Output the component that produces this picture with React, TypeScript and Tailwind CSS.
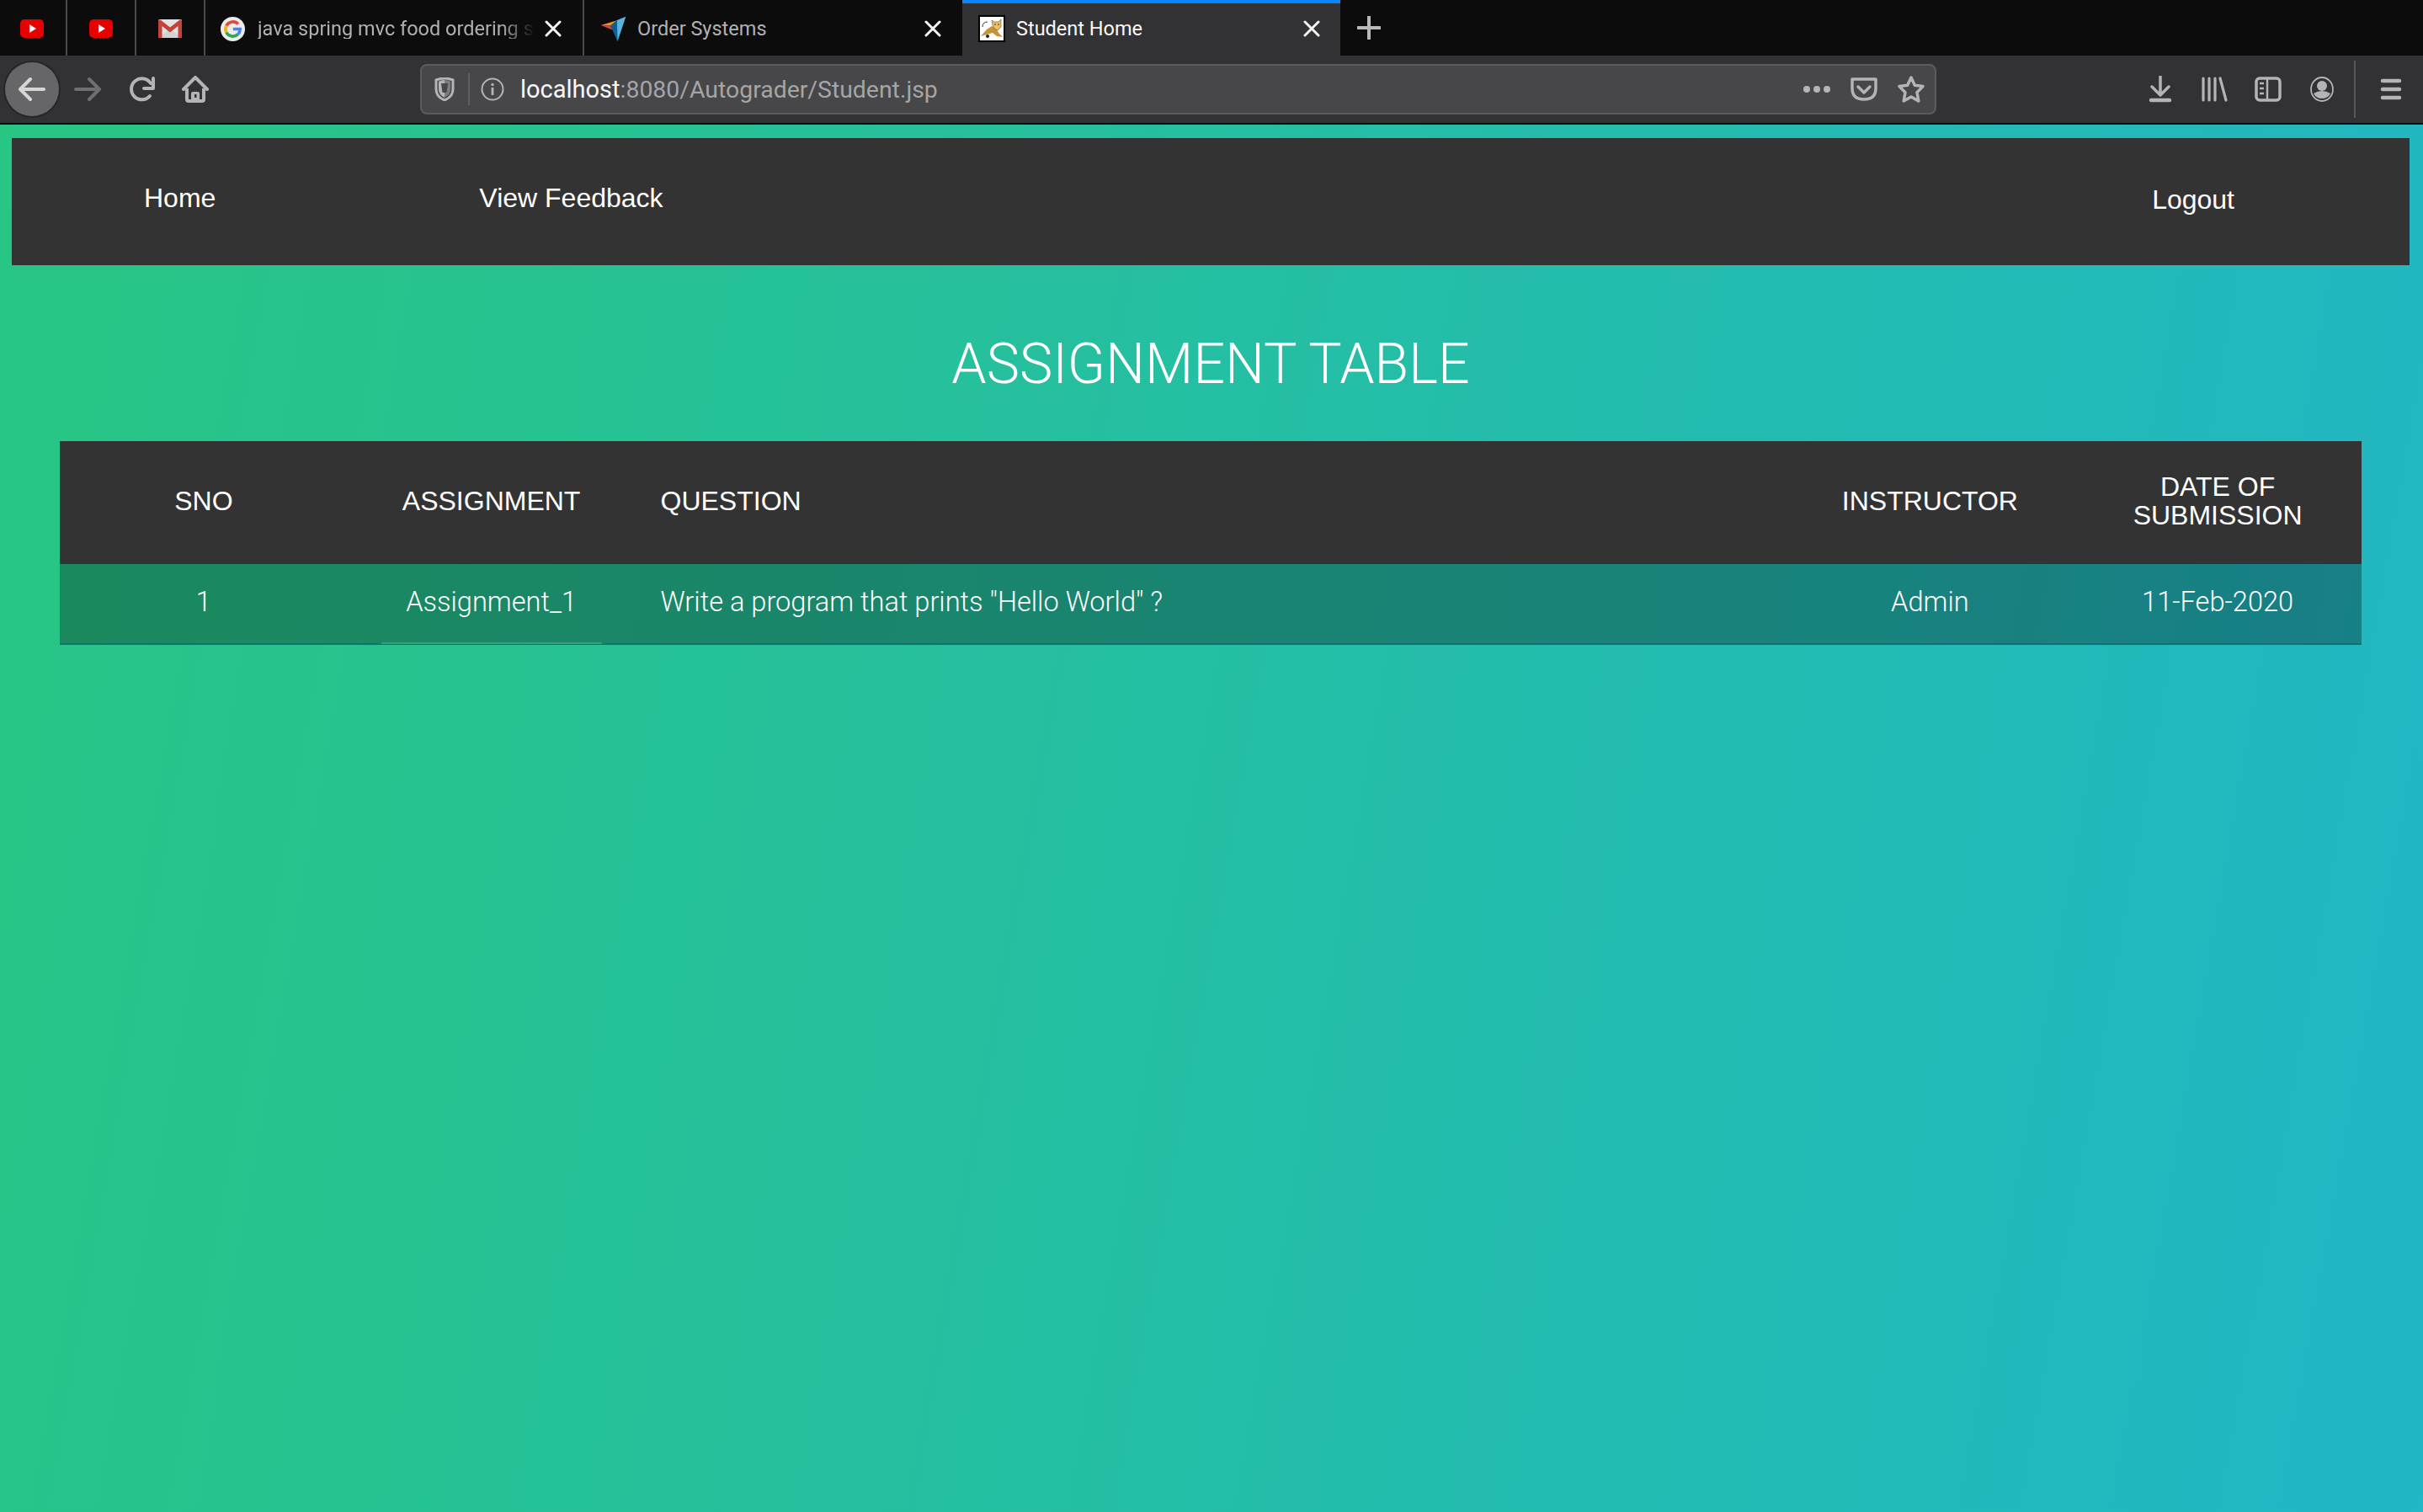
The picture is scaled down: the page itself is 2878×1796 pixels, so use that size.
import React from "react";

const ICON = "#b4b4b6";

function Close() {
  return (
    <svg width="20" height="20" viewBox="0 0 20 20" className="shrink-0">
      <path d="M2 2 L18 18 M18 2 L2 18" stroke="#f4f4f4" strokeWidth="3" strokeLinecap="round" />
    </svg>
  );
}

function YouTube() {
  return (
    <svg width="28" height="22" viewBox="0 0 28 22">
      <rect x="0" y="0" width="28" height="22" rx="5" fill="#e60000" />
      <path d="M11 6 L19 11 L11 16 Z" fill="#fff" />
    </svg>
  );
}

function Gmail() {
  return (
    <svg width="28" height="22" viewBox="0 0 28 22">
      <rect x="0" y="0" width="28" height="22" rx="1.5" fill="#e3e3e3" />
      <path d="M0 22 L14 11 L28 22 Z" fill="#d2d2d2" />
      <path d="M0 1.5 L0 21 Q0 22 1 22 L4.5 22 L4.5 8 L14 15.5 L23.5 8 L23.5 22 L27 22 Q28 22 28 21 L28 1.5 Q27 0 25.5 0.5 L14 9.5 L2.5 0.5 Q1 0 0 1.5 Z" fill="#c4433a" />
    </svg>
  );
}

function Google() {
  return (
    <svg width="29" height="29" viewBox="0 0 32 32" className="shrink-0">
      <circle cx="16" cy="16" r="16" fill="#ececec" />
      <path d="M7.6 11.6 A 9.6 9.6 0 0 1 23 9.4" fill="none" stroke="#dd4b3e" strokeWidth="4" />
      <path d="M7.6 11.6 A 9.6 9.6 0 0 0 7.6 20.4" fill="none" stroke="#f0b501" strokeWidth="4" />
      <path d="M7.6 20.4 A 9.6 9.6 0 0 0 22.8 22.8" fill="none" stroke="#34a353" strokeWidth="4" />
      <path d="M22.8 22.8 A 9.6 9.6 0 0 0 25.6 16 L16.4 16" fill="none" stroke="#4285f4" strokeWidth="4" />
    </svg>
  );
}

function Plane() {
  return (
    <svg width="33" height="33" viewBox="65 52 100 100" className="shrink-0">
      <polygon points="70,88 130,70 105,90" fill="#e8942a" />
      <polygon points="70,88 105,90 112,105" fill="#d8443a" />
      <polygon points="105,90 128,70 130,147" fill="#0f5f92" />
      <polygon points="160,57 130,147 128,70" fill="#58b4e0" />
    </svg>
  );
}

function Tomcat() {
  return (
    <div className="w-[32px] h-[32px] bg-white border-2 border-black shrink-0">
      <svg width="28" height="28" viewBox="0 0 28 28">
        <path d="M3 12 Q3 6 9 6" fill="none" stroke="#333" strokeWidth="1" />
        <path d="M1 23 L8 15 L14 11 L19 14 L23 20 L27 24 L20 23 L15 19 L8 21 Z" fill="#c4933a" />
        <path d="M14 4 L17 6 L22 6 L25 3 L25 12 L21 16 L17 14 L15 10 Z" fill="#e9c063" stroke="#6a4a16" strokeWidth="0.6" />
        <circle cx="9" cy="23" r="2" fill="#222" />
        <path d="M17 9 H19 M21 9 H23" stroke="#333" strokeWidth="1" />
      </svg>
    </div>
  );
}

function Ico({ children, w = 32, h = 32 }: { children: React.ReactNode; w?: number; h?: number }) {
  return (
    <svg width={w} height={h} viewBox={`0 0 ${w} ${h}`} fill="none">
      {children}
    </svg>
  );
}

function Btn({ children, className = "" }: { children: React.ReactNode; className?: string }) {
  return <div className={`w-[64px] h-[64px] flex items-center justify-center shrink-0 ${className}`}>{children}</div>;
}

export default function App() {
  const tabText = "text-[23.5px] leading-none font-['Roboto',sans-serif] whitespace-nowrap mt-[1px]";
  const th = "text-[32px] leading-[34px] font-normal text-white text-center align-middle pb-[5px] px-[30px]";
  const td = "text-[32.6px] leading-[38px] font-light text-white text-center align-middle pb-[4px] font-['Roboto',sans-serif] border-b-2 border-[#176f6d]";

  return (
    <div className="w-[2878px] h-[1796px] flex flex-col overflow-hidden font-['Liberation_Sans',sans-serif]">
      {/* tab strip */}
      <div className="h-[66px] bg-[#0c0c0d] flex shrink-0">
        <div className="w-[80px] flex items-center justify-center pt-[2px] pr-[2px] border-r-2 border-[#4a4a4c]"><YouTube /></div>
        <div className="w-[82px] flex items-center justify-center pt-[2px] border-r-2 border-[#4a4a4c]"><YouTube /></div>
        <div className="w-[82px] flex items-center justify-center pt-[2px] border-r-2 border-[#4a4a4c]"><Gmail /></div>
        <div className="w-[450px] flex items-center pt-[2px] pl-[18px] border-r-2 border-[#4a4a4c]">
          <Google />
          <span className={`${tabText} ml-[15px] w-[336px] overflow-hidden text-[#b1b1b3] [mask-image:linear-gradient(to_right,black_86%,transparent_98%)]`}>java spring mvc food ordering sy</span>
          <span className="ml-[5px] flex"><Close /></span>
        </div>
        <div className="w-[449px] flex items-center pt-[2px] pl-[18px]">
          <Plane />
          <span className={`${tabText} ml-[12px] w-[341px] text-[#b1b1b3]`}>Order Systems</span>
          <Close />
        </div>
        <div className="w-[449px] flex items-center pl-[19px] bg-[#323234] border-t-4 border-[#0a84ff] pb-[2px]">
          <Tomcat />
          <span className={`${tabText} ml-[13px] w-[341px] text-[#f9f9fa]`}>Student Home</span>
          <Close />
        </div>
        <div className="ml-[20px] flex items-center">
          <svg width="28" height="28" viewBox="0 0 28 28">
            <path d="M14 1 V27 M1 14 H27" stroke="#b9b9bb" strokeWidth="4" strokeLinecap="round" />
          </svg>
        </div>
      </div>

      {/* toolbar */}
      <div className="h-[82px] bg-[#323234] border-b-2 border-[#0c0c0d] flex items-center pl-[6px] pb-[1px] shrink-0">
        <Btn className="rounded-full bg-[#666668] ring-2 ring-[#262628]">
          <Ico>
            <path d="M30 16 H3 M14 4 L2 16 L14 28" stroke="#d6d6d7" strokeWidth="4" strokeLinecap="round" strokeLinejoin="round" />
          </Ico>
        </Btn>
        <Btn className="ml-[2px]">
          <Ico>
            <path d="M2 16 H29 M18 4 L30 16 L18 28" stroke="#6f6f71" strokeWidth="4" strokeLinecap="round" strokeLinejoin="round" />
          </Ico>
        </Btn>
        <Btn>
          <Ico>
            <path d="M26 24 A12.5 12.5 0 1 1 27 9" stroke={ICON} strokeWidth="4" strokeLinecap="round" />
            <path d="M30 3 V15 H19" stroke={ICON} strokeWidth="4" strokeLinejoin="round" strokeLinecap="round" />
          </Ico>
        </Btn>
        <Btn>
          <Ico>
            <path d="M2 16 L16 2 L30 16" stroke={ICON} strokeWidth="4" strokeLinecap="round" strokeLinejoin="round" />
            <path d="M6 15 V28 Q6 30 8 30 H24 Q26 30 26 28 V15" stroke={ICON} strokeWidth="4" />
            <path d="M11 30 V21 Q11 19 13 19 H19 Q21 19 21 21 V30 Z" fill={ICON} />
            <rect x="15" y="22" width="2.5" height="4" fill="#323234" />
          </Ico>
        </Btn>

        {/* url bar */}
        <div className="ml-[235px] w-[1801px] h-[60px] shrink-0 rounded-[8px] bg-[#474749] border-2 border-[#5b5b5d] flex items-center">
          <div className="ml-[15px] w-[24px] flex justify-center">
            <Ico w={24} h={28}>
              <path d="M2 3 Q12 -1 22 3 V14 Q22 23 12 27 Q2 23 2 14 Z" stroke={ICON} strokeWidth="3" />
              <path d="M12 3 Q17 3 19 5 V14 Q19 20 12 24 Z" fill={ICON} opacity="0.5" />
              <path d="M12 3 Q7 3 5 5 V14 Q5 20 12 24 Z" fill={ICON} />
              <path d="M8 7 H16 L14.5 18 H9.5 Z" fill="#474749" />
            </Ico>
          </div>
          <div className="ml-[16px] w-[2px] h-[38px] bg-[#5f5f61]" />
          <div className="ml-[13px] w-[28px]">
            <Ico w={28} h={28}>
              <circle cx="14" cy="14" r="12.5" stroke={ICON} strokeWidth="2" />
              <circle cx="14" cy="8.5" r="1.7" fill={ICON} />
              <rect x="12.6" y="12" width="2.8" height="9" fill={ICON} />
            </Ico>
          </div>
          <div className="ml-[19px] mt-[3px] text-[28.4px] leading-none whitespace-nowrap font-['Roboto',sans-serif] text-[#a5a5a7]">
            <span className="text-[29px] text-[#f9f9fa]">localhost</span>:8080/Autograder/Student.jsp
          </div>
          <div className="ml-auto flex items-center mr-[12px]">
            <Ico w={32} h={10}>
              <circle cx="4" cy="5" r="4" fill={ICON} />
              <circle cx="16" cy="5" r="4" fill={ICON} />
              <circle cx="28" cy="5" r="4" fill={ICON} />
            </Ico>
            <div className="ml-[24px]">
              <Ico w={32} h={28}>
                <path d="M2 2 H30 V13 Q30 26 16 26 Q2 26 2 13 Z" stroke={ICON} strokeWidth="3.5" strokeLinejoin="round" />
                <path d="M9 11 L16 18 L23 11" stroke={ICON} strokeWidth="3.5" strokeLinecap="round" strokeLinejoin="round" />
              </Ico>
            </div>
            <div className="ml-[24px]">
              <Ico>
                <path d="M16 2 L20.3 11.2 L30 12.6 L23 19.8 L24.8 30 L16 25 L7.2 30 L9 19.8 L2 12.6 L11.7 11.2 Z" stroke={ICON} strokeWidth="3.5" strokeLinejoin="round" />
              </Ico>
            </div>
          </div>
        </div>

        <Btn className="ml-[234px]">
          <Ico>
            <path d="M16 1 V22 M6 13 L16 23 L26 13" stroke={ICON} strokeWidth="3.5" strokeLinecap="round" strokeLinejoin="round" />
            <path d="M5 29 H27" stroke={ICON} strokeWidth="4.5" strokeLinecap="round" />
          </Ico>
        </Btn>
        <Btn>
          <Ico>
            <path d="M3 3 V29 M10 3 V29 M17 3 V29 M23 3 L30 29" stroke={ICON} strokeWidth="3.2" strokeLinecap="round" />
          </Ico>
        </Btn>
        <Btn>
          <Ico>
            <rect x="2" y="3" width="28" height="26" rx="4" stroke={ICON} strokeWidth="3.5" />
            <path d="M15 3 V29" stroke={ICON} strokeWidth="2.5" />
            <path d="M6 9 H11 M6 15 H11 M6 21 H11" stroke={ICON} strokeWidth="2.5" />
          </Ico>
        </Btn>
        <Btn>
          <Ico w={30} h={30}>
            <ellipse cx="15" cy="15" rx="13" ry="14" stroke={ICON} strokeWidth="1.8" />
            <circle cx="15" cy="11" r="6" fill={ICON} />
            <path d="M5 20 Q15 14 25 20 Q22 26 15 26 Q8 26 5 20 Z" fill={ICON} />
          </Ico>
        </Btn>
        <div className="ml-[6px] w-[2px] h-[68px] bg-[#58585a] shrink-0" />
        <Btn className="ml-[10px]">
          <Ico>
            <path d="M6 6 H26 M6 16 H26 M6 26 H26" stroke={ICON} strokeWidth="4.5" strokeLinecap="round" />
          </Ico>
        </Btn>
      </div>

      {/* page */}
      <div className="flex-1 bg-[linear-gradient(100deg,#27c683,#22b6c6)] pt-[16px] pl-[14px] pr-[16px]">
        <nav className="h-[151px] bg-[#333333] flex text-[32px] leading-none text-white pl-[157px] pr-[208px]">
          <a className="mt-[55px]">Home</a>
          <a className="mt-[55px] ml-[313px]">View Feedback</a>
          <a className="mt-[57px] ml-auto">Logout</a>
        </nav>

        <h1 className="mt-[85px] text-center text-[66.2px] leading-[66px] font-light text-white font-['Roboto',sans-serif]">
          ASSIGNMENT TABLE
        </h1>

        <div className="mt-[58px] mx-[57px] w-[2734px] relative">
          <table className="w-full table-fixed border-collapse">
            <colgroup>
              <col className="w-[12.5%]" />
              <col className="w-[12.5%]" />
              <col className="w-[50%]" />
              <col className="w-[12.5%]" />
              <col className="w-[12.5%]" />
            </colgroup>
            <thead>
              <tr className="h-[146px] bg-[#333333]">
                <th className={th}>SNO</th>
                <th className={th}>ASSIGNMENT</th>
                <th className={`${th} text-left`}>QUESTION</th>
                <th className={th}>INSTRUCTOR</th>
                <th className={th}>DATE OF SUBMISSION</th>
              </tr>
            </thead>
            <tbody>
              <tr className="h-[95px] bg-black/30">
                <td className={td}>1</td>
                <td className={td}>Assignment_1</td>
                <td className={`${td} text-left pl-[30px]`}>Write a program that prints "Hello World" ?</td>
                <td className={td}>Admin</td>
                <td className={td}>11-Feb-2020</td>
              </tr>
            </tbody>
          </table>
          <div className="absolute left-[382px] top-[239px] w-[262px] h-[2px] bg-[#3e9a80]" />
        </div>
      </div>
    </div>
  );
}
